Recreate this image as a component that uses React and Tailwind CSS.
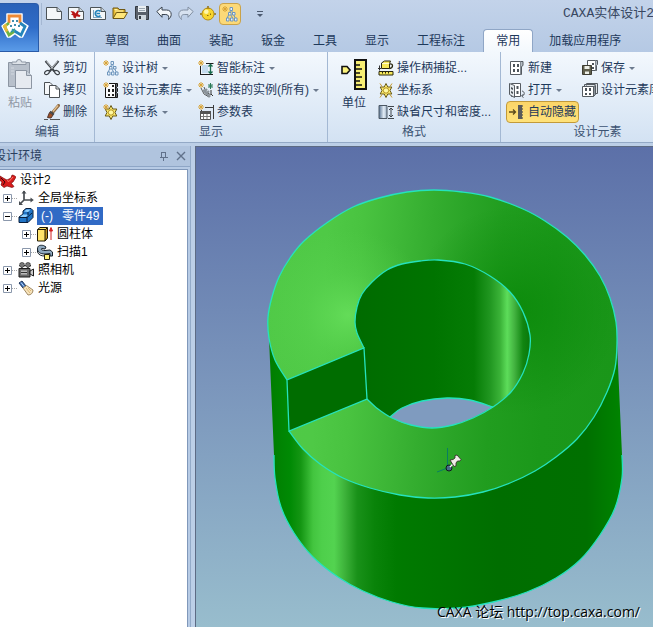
import { clsx } from "clsx";

const Icon = ({ children, className = "size-4" }) => (
  <svg viewBox="0 0 16 16" className={clsx("shrink-0", className)} fill="none" aria-hidden="true">
    {children}
  </svg>
);

const Spark = () => (
  <path d="M3 0v6M0 3h6M1 1l4 4M5 1l-4 4" stroke="#d9a436" strokeWidth="1" />
);

const Page = () => (
  <path d="M.5 1.500h10.500l4.500 4v8h-15z" fill="#f4f7f9" stroke="#4c5357" />
);

const Fold = () => <path d="M11 1.500v4h4.500" fill="#cbd5dc" stroke="#4c5357" />;

const NewIcon = () => (
  <Icon><Page /><Fold /></Icon>
);

const NewDesignIcon = () => (
  <Icon>
    <Page /><Fold />
    <path d="M2.500 5l3.500.5 1.500 2L9.500 4.500l1.500.5L9.800 8l2.700 1.500-1 1.500-3-.8-1 2.300-2-1-.3-2L3 8.500l1.500-1z" fill="#b81515" />
  </Icon>
);

const NewDrawingIcon = () => (
  <Icon>
    <Page /><Fold />
    <path d="M3 11.500h9M3.500 4v8" stroke="#7ba3c0" />
    <path d="M10.500 5.500A3 3 0 1 0 10.500 9.500M6.500 7.500h3.500" stroke="#2484bb" strokeWidth="1.600" />
  </Icon>
);

const OpenIcon = () => (
  <Icon>
    <path d="M1 12V2h5l1 1.500h6v3" fill="#e5bb35" stroke="#6e5713" />
    <path d="M1 12.500L4.500 6.500h11L12 12.500z" fill="#ffe678" stroke="#6e5713" />
    <path d="M2.500 3.500h3M3 5h8" stroke="#fff3ae" />
  </Icon>
);

const SaveIcon = () => (
  <Icon>
    <path d="M1.500.500h13v13h-12l-1-1z" fill="#59606a" stroke="#333a42" />
    <path d="M4 0h8v6H4z" fill="#e9eef2" />
    <path d="M5 2.500h6M5 4.500h6" stroke="#9ba7b2" />
    <path d="M4 9h8v5H4z" fill="#cfd7de" />
    <path d="M5 10h2v3H5z" fill="#333a42" />
  </Icon>
);

const Arrow = ({ redo }) => (
  <Icon className={clsx("size-4", redo && "-scale-x-100 opacity-45")}>
    <path
      d="M.8 5.500L6 1v3h4.500c3 0 4.700 1.800 4.700 4.300 0 2.300-1.200 3.800-2.700 5.200.7-2.500.2-5-2.700-5H6v2.800z"
      fill="#f4f7fa"
      stroke="#39434f"
      strokeLinejoin="round"
    />
  </Icon>
);

const BallIcon = () => (
  <Icon>
    <path d="M8 0v3M0 8h2M14 8h2" stroke="#8c6d14" strokeWidth="1.500" />
    <circle cx="8" cy="8" r="6" fill="#f7d52f" stroke="#b48b14" />
    <circle cx="6.300" cy="5.800" r="2.300" fill="#fff6a8" />
    <path d="M6 2.500h4" stroke="#b48b14" />
    <path d="M7 9.500h1.500M10.500 7.500v1.500" stroke="#8c6d14" />
  </Icon>
);

const TreeIcon = () => (
  <Icon>
    <g stroke="#6e96bd" strokeWidth="1">
      <path d="M9 3.500l-4 9M9 3.500l4.500 9M8 7l2.500 5" />
      <path d="M8 1.500h2.500v3H8zM6.500 6.500H9v2.500H6.500zM10.500 6.500H13v2.500h-2.500zM4.500 12H7v3H4.500zM8.500 12H11v3H8.500zM12.500 12h2.500v3h-2.500z" fill="#e9f2fb" />
    </g>
    <Spark />
  </Icon>
);

const CatalogIcon = () => (
  <Icon>
    <path d="M2.500 5v10.500h10V1.500H6" fill="#fafbfc" stroke="#161616" />
    <path d="M12.500 1.500h2v3l-1 1 1 1v3l-1 1 1 1v4h-2z" fill="#5f666d" stroke="#161616" />
    <path d="M5 7h2v3H5zM9 7h2v3H9zM5 12h2v2H5zM9 12h2v2H9zM9 3h2v2H9z" fill="#222" />
    <Spark />
  </Icon>
);

const AxisStarIcon = ({ spark }) => (
  <Icon>
    <path d="M8 1.500l1.800 3.500h4L12 8.500l1.800 3.500h-4L8 15.500 6.200 12h-4L4 8.500 2.200 5h4z" fill="#f9e76a" stroke="#6a5b1a" />
    <circle cx="8" cy="8.500" r="2.700" fill="#fff9a2" stroke="#b59322" />
    {spark ? <Spark /> : <path d="M2 1.500l2 3M14 1.500l-2 3M2 15.500l2-3M14 15.500l-2-3" stroke="#c69a2d" />}
  </Icon>
);

const SmartDimIcon = () => (
  <Icon>
    <path d="M2.500 6v9M2 14.500h13M8 3.500h7.500" stroke="#1c1c1c" />
    <path d="M4 5h6v8H4z" fill="#c4dbee" />
    <path d="M12.500 4.500v9M10.500 6.500l2-2 2 2M10.500 11.500l2 2 2-2" stroke="#186a4c" strokeWidth="1.300" />
    <Spark />
  </Icon>
);

const LinkIcon = () => (
  <Icon>
    <path d="M3 6l3 6 5 3M6 5l2 5 5 3" stroke="#555" />
    <path d="M5 8l7 7M8 12l3-3M6.500 9.500L9 7" stroke="#8a9299" strokeWidth="2.200" />
    <path d="M12.500 1v6M10 4h5M10.500 2l4 4M14.500 2l-4 4" stroke="#2a7b58" />
    <path d="M13 8v4l2 2" stroke="#333" />
    <Spark />
  </Icon>
);

const ParamIcon = () => (
  <Icon>
    <path d="M15.500 1v14M7 3.500h8M3.500 6v2" stroke="#3c3c3c" />
    <path d="M2.500 7.500h10v8h-10z" fill="#fff" stroke="#555" />
    <path d="M2 7h11v3H2z" fill="#555" />
    <path d="M5.500 10v5M9 10v5M3 12.500h9" stroke="#777" />
    <Spark />
  </Icon>
);

const CutIcon = () => (
  <Icon>
    <path d="M1.500 1l9 10.500M14.500 1l-9 10.500" stroke="#3d4247" strokeWidth="2" />
    <path d="M2.500 1.500l6 7M13.500 1.500l-6 7" stroke="#e2e6ea" strokeWidth=".8" />
    <ellipse cx="3" cy="12.500" rx="2.600" ry="1.700" stroke="#3d4247" strokeWidth="1.200" transform="rotate(-35 3 12.500)" />
    <ellipse cx="13" cy="12.500" rx="2.600" ry="1.700" stroke="#3d4247" strokeWidth="1.200" transform="rotate(35 13 12.500)" />
  </Icon>
);

const CopyIcon = () => (
  <Icon>
    <path d="M.5.500H6l3 3v9H.5z" fill="#f5f7f9" stroke="#4b5054" />
    <path d="M5.500 3.500H12l3.500 3.500v8.500h-10z" fill="#fff" stroke="#4b5054" />
    <path d="M12 3.500V7h3.500" stroke="#4b5054" />
  </Icon>
);

const BrushIcon = () => (
  <Icon>
    <path d="M14.500 1.500L9 8" stroke="#8d6a44" strokeWidth="3" strokeLinecap="round" />
    <path d="M14 1.500L9 7.500" stroke="#e3c08e" strokeWidth="1.300" />
    <path d="M5.500 8.500l3.500 2.500-2 3L3.500 13.500z" fill="#a04f24" stroke="#51332a" />
    <path d="M6 7.500l4 3" stroke="#444" strokeWidth="1.600" />
    <path d="M0 15.500h4M6 15.500h10" stroke="#555" />
  </Icon>
);

const PasteIcon = () => (
  <svg viewBox="0 0 26 32" className="h-8 w-[26px]" fill="none" aria-hidden="true">
    <path d="M1.500 3.500h21v24h-21z" fill="#b8c0cb" stroke="#8d96a3" />
    <path d="M5 5.500h14V3h-4.500a2.500 2.500 0 0 0-5 0H5z" fill="#dde2e8" stroke="#8d96a3" />
    <path d="M4 9h3M4 12h3M4 15h3" stroke="#d2d8e0" />
    <path d="M8.500 11.500h11l5 5v13h-16z" fill="#e6eaf0" stroke="#8d96a3" />
    <path d="M19.500 11.500v5h5" fill="#c8d0da" stroke="#8d96a3" />
  </svg>
);

const UnitIcon = () => (
  <svg viewBox="0 0 26 32" className="h-8 w-[26px]" fill="none" aria-hidden="true">
    <path d="M1 7.500h5l3 3.500-3 3.500H1z" fill="#fbf27c" stroke="#111" strokeWidth="1.600" />
    <path d="M14 1h11v29H14z" fill="#f7ee73" stroke="#111" strokeWidth="2" />
    <path d="M14 6h5M14 10h7M14 14h5M14 18h7M14 22h5M14 26h7" stroke="#111" strokeWidth="1.500" />
  </svg>
);

const SnapIcon = () => (
  <Icon>
    <path d="M3.500 3l3-2h6l-1 2.500v5h-8z" fill="#f7e95b" stroke="#29260f" />
    <path d="M4 3.500h7.500" stroke="#fffbd0" />
    <path d="M11.500 4c4-1 4 4 0 4.500" stroke="#29260f" strokeWidth="1.300" />
    <path d="M1.500 5.500v5M0 8.500h3" stroke="#333" />
    <path d="M1 11.500h14v3.500H1z" fill="#f7e95b" stroke="#29260f" />
    <path d="M4.500 11.500v2M7.500 11.500v2M10.500 11.500v2" stroke="#29260f" />
  </Icon>
);

const SizeIcon = () => (
  <Icon>
    <path d="M1 1.500h8v13H1z" fill="url(#sizeFill)" stroke="#4d5864" />
    <path d="M10 2.500h6M10 14.500h6M13 4v9M11 6l2-2 2 2M11 11l2 2 2-2" stroke="#40464d" />
    <defs>
      <linearGradient id="sizeFill">
        <stop stopColor="#5b7695" />
        <stop offset=".6" stopColor="#e6eff8" />
        <stop offset="1" stopColor="#95a8bd" />
      </linearGradient>
    </defs>
  </Icon>
);

const BookIcon = () => (
  <Icon>
    <path d="M1.500 1.500h10v13h-10z" fill="#fff" stroke="#555b61" />
    <path d="M11.500 1.500h2.500v4l-1.500 1V14.500h-1" fill="#b4bcc4" stroke="#555b61" />
    <path d="M4 4h2v3H4zM8 4h2v3H8zM4 9h2v3H4zM8 9h2v3H8z" fill="#4d545a" />
  </Icon>
);

const BookOpenIcon = () => (
  <Icon>
    <path d="M2.500 1.500h9v13h-9z" fill="#fff" stroke="#555b61" />
    <path d="M.5 1.500l5 2v12l-5-3z" fill="#e6ebef" stroke="#555b61" />
    <path d="M7.500 4h2v3h-2zM7.500 9h2v3h-2zM2 5l2 1v2L2 7zM2 9l2 1v2l-2-1z" fill="#4d545a" />
    <path d="M13 9c3 .5 3 4.500 0 5m1.500-2L12.500 14l2 1.500" stroke="#555b61" />
  </Icon>
);

const BookSaveIcon = () => (
  <Icon>
    <path d="M5.500.500h8v10h-8z" fill="#fff" stroke="#555b61" />
    <path d="M13.500.500H15.500v4l-1 1v5h-1" fill="#b4bcc4" stroke="#555b61" />
    <path d="M10 3h2v2h-2zM10 7h2v2h-2z" fill="#4d545a" />
    <path d="M.5 5.500h9v9h-9z" fill="#605f4c" stroke="#3d3c31" />
    <path d="M2.500 6h5v3h-5zM3 11.500h4V14H3z" fill="#eef0e8" />
  </Icon>
);

const BooksIcon = () => (
  <Icon>
    <path d="M4.500 3.500V1.500h11v10h-2M2.500 5V2.500h11" fill="#dfe4e8" stroke="#555b61" />
    <path d="M.5 4.500h11v10H.5z" fill="#fff" stroke="#555b61" />
    <path d="M11.500 4.500l2-1v9l-2 2z" fill="#8b939b" stroke="#555b61" />
    <path d="M3 6h2v3H3zM7 6h2v3H7zM3 11h2v2H3zM7 11h2v2H7z" fill="#4d545a" />
  </Icon>
);

const AutoHideIcon = () => (
  <Icon>
    <path d="M0 8h6M4 5.500L6.500 8 4 10.500" stroke="#5b4a1c" strokeWidth="1.300" />
    <path d="M9 1h4v14H9z" fill="#5a5a5a" />
    <path d="M13.500 1v14" stroke="#92855a" strokeDasharray="2 1" />
  </Icon>
);

const AppLogo = () => (
  <svg viewBox="0 0 28 28" className="size-7" fill="none" aria-hidden="true">
    <path d="M6 2h15v8l6 4-5.500 11h-3L14 21.500 9.500 25h-3L1 14l5-4z" fill="#fff" stroke="#fff" strokeWidth="1.500" strokeLinejoin="round" />
    <path d="M8 11V4h11v7" stroke="#ef8a35" strokeWidth="2.800" />
    <path d="M8 11l-4.500 3.500L8 23l5-3.500" stroke="#6fb244" strokeWidth="2.800" />
    <path d="M19 11l5 3.500L20 23l-6.500-4" stroke="#2485bb" strokeWidth="2.800" />
    <path d="M5.500 12.500l-2 2 2.500 5" stroke="#e8b83a" strokeWidth="2.800" />
    <path d="M10 20l4-3M14 19.500l-3-2.500" stroke="#2f9aa0" strokeWidth="1.600" />
    <path d="M11 8h2v2h-2zM15 8h2v2h-2zM9 13h2v2H9zM13 12h2v2h-2zM17 13h2v2h-2z" fill="#3f8fae" />
  </svg>
);

const DesignIcon = () => (
  <Icon>
    <path d="M0 4l4 2.500 3 1.500 4-2 1-3 2 .5 2 1.500-3 5-2 1 3 3.500-2 1-5-1.500-3 1.500-3-2.500 1-3-2-1.500z" fill="#d81c1c" stroke="#7e0c0c" strokeWidth=".7" />
    <path d="M7 8.500l2 1 4-4.500" stroke="#ff7c6d" />
    <path d="M1 6l4 4-2 3" stroke="#3b0808" />
  </Icon>
);

const AxisIcon = () => (
  <Icon>
    <path d="M6 1v9h8M6 10l-4 4" stroke="#484d52" strokeWidth="1.700" />
    <path d="M3.500 3.500L6 .5l2.500 3zM12.500 7.500L15.800 10l-3.300 2.500zM1 11v4h4z" fill="#484d52" />
  </Icon>
);

const PartIcon = () => (
  <Icon>
    <path d="M1 9l4-3V3l3-2.500h5l2 2v7l-5 5H1z" fill="#2074c6" stroke="#081e3c" />
    <path d="M2 9l3-2.500h5L8 9zM6 3.500L8.500 1.500h4L10 4z" fill="#8fd0ff" />
    <path d="M1 9.500h8v5M9 9.500l5-4.500M10 4v3" stroke="#081e3c" />
  </Icon>
);

const CylinderIcon = () => (
  <Icon>
    <path d="M.5 3.500L3 1.500h7v10.500L8 15H.5z" fill="#ffe36a" stroke="#201a07" />
    <path d="M8 4l2.500-2.500V12L8 15z" fill="#bd8e19" stroke="#201a07" />
    <path d="M.5 3.500H8" stroke="#201a07" />
    <path d="M14 14V4M12.500 5L14 1.500 15.500 5z" stroke="#d22020" fill="#d22020" />
  </Icon>
);

const SweepIcon = () => (
  <Icon>
    <path d="M.5 5c0-4 3-4 6-3.500L9 3 8 5 5 4.500c-2 .5 0 2 3 2l5-.5 2.500 2v4H13V9.500l-5 .5C3 10 .5 8 .5 5z" fill="#8fa9bf" stroke="#15202a" />
    <path d="M.5 5v3c1 3 4 4 7 4" stroke="#15202a" />
    <path d="M7.500 10.500h5v5h-5z" fill="#fff27a" stroke="#282510" />
  </Icon>
);

const CameraIcon = () => (
  <Icon>
    <circle cx="4" cy="3" r="2.500" fill="#777" stroke="#222" strokeDasharray="2 1" />
    <circle cx="10" cy="3" r="2.500" fill="#777" stroke="#222" strokeDasharray="2 1" />
    <path d="M1 6.500h11v8.500H1z" fill="#6b6b6b" stroke="#1d1d1d" />
    <path d="M12 9l3.500-2v7L12 12z" fill="#ccc" stroke="#1d1d1d" />
    <path d="M3 8.500h6v4H3z" fill="#bcbcbc" />
    <path d="M3 10.500h6" stroke="#333" />
  </Icon>
);

const LightIcon = () => (
  <Icon>
    <path d="M1 3l3-2 4 5-3 2z" fill="#3d6fb4" stroke="#1d3358" />
    <path d="M3 2.500l3 4" stroke="#b6d6fa" />
    <path d="M5 8l3.500-2.500L15 10c0 3-2 5-5 5z" fill="#f8e5bd" stroke="#a08965" />
    <path d="M8 8l4 5M10 8l3 3" stroke="#dcb778" />
  </Icon>
);

const quickTools = [
  { name: "新建文件", icon: <NewIcon /> },
  { name: "新建设计", icon: <NewDesignIcon /> },
  { name: "新建图纸", icon: <NewDrawingIcon /> },
  { name: "打开文件", icon: <OpenIcon /> },
  { name: "保存文件", icon: <SaveIcon /> },
  { name: "撤销", icon: <Arrow /> },
  { name: "重做", icon: <Arrow redo /> },
  { name: "三维球", icon: <BallIcon /> },
  { name: "显示设计树", icon: <TreeIcon />, active: true },
];

const tabs = ["特征", "草图", "曲面", "装配", "钣金", "工具", "显示", "工程标注", "常用", "加载应用程序"];

const Caret = () => (
  <span className="ml-px h-0 w-0 border-x-3 border-t-3 border-x-transparent border-t-[#6c7a8e]" />
);

const Tool = ({ icon, label, menu, active }) => (
  <button
    type="button"
    className={clsx(
      "flex h-[22px] items-center gap-[3px] rounded-sm border px-[2px]",
      active ? "border-[#c29a3a] bg-linear-to-b from-[#fbd568] to-[#ffe27a]" : "border-transparent"
    )}
  >
    {icon}
    <span>{label}</span>
    {menu && <Caret />}
  </button>
);

const BigTool = ({ icon, label, disabled }) => (
  <button
    type="button"
    disabled={disabled}
    className={clsx("flex h-[54px] flex-col items-center justify-between px-1 pt-[2px] leading-4", disabled && "text-[#9199a6]")}
  >
    {icon}
    <span>{label}</span>
  </button>
);

const Column = ({ children }) => <div className="flex flex-col items-start">{children}</div>;

const Group = ({ title, className, children }) => (
  <section className="flex shrink-0 flex-col border-r border-[#a3b8d3] pt-[5px]">
    <div className={clsx("flex", className)}>{children}</div>
    <h2 className="text-center leading-[18px] text-[#3c5373]">{title}</h2>
  </section>
);

const Ribbon = () => (
  <div className="flex h-[91px] shrink-0 overflow-hidden border-b border-[#93a9c6] bg-linear-to-b from-[#f3f8fd] via-[#e3edf8] to-[#d3e2f3]">
    <Group title="编辑" className="gap-1 pl-[3px] pr-1">
      <BigTool icon={<PasteIcon />} label="粘贴" disabled />
      <Column>
        <Tool icon={<CutIcon />} label="剪切" />
        <Tool icon={<CopyIcon />} label="拷贝" />
        <Tool icon={<BrushIcon />} label="删除" />
      </Column>
    </Group>
    <Group title="显示" className="px-[5px]">
      <Column>
        <Tool icon={<TreeIcon />} label="设计树" menu />
        <Tool icon={<CatalogIcon />} label="设计元素库" menu />
        <Tool icon={<AxisStarIcon spark />} label="坐标系" menu />
      </Column>
      <Column>
        <Tool icon={<SmartDimIcon />} label="智能标注" menu />
        <Tool icon={<LinkIcon />} label="链接的实例(所有)" menu />
        <Tool icon={<ParamIcon />} label="参数表" />
      </Column>
    </Group>
    <Group title="格式" className="gap-1 pl-[9px] pr-[6px]">
      <BigTool icon={<UnitIcon />} label="单位" />
      <Column>
        <Tool icon={<SnapIcon />} label="操作柄捕捉..." />
        <Tool icon={<AxisStarIcon />} label="坐标系" />
        <Tool icon={<SizeIcon />} label="缺省尺寸和密度..." />
      </Column>
    </Group>
    <Group title="设计元素" className="pl-[5px] pr-5">
      <Column>
        <Tool icon={<BookIcon />} label="新建" />
        <Tool icon={<BookOpenIcon />} label="打开" menu />
        <Tool icon={<AutoHideIcon />} label="自动隐藏" active />
      </Column>
      <Column>
        <Tool icon={<BookSaveIcon />} label="保存" menu />
        <Tool icon={<BooksIcon />} label="设计元素库" menu />
      </Column>
    </Group>
  </div>
);

const Header = () => (
  <header className="flex shrink-0 bg-linear-to-b from-[#c3d3ea] to-[#b5c9e4]">
    <button
      type="button"
      aria-label="菜单"
      className="mt-[3px] flex w-[39px] items-center rounded-tr-sm border border-l-0 border-[#2a5ba8] bg-linear-to-b from-[#2a62b8] via-[#2f6cc8] to-[#5a9be8] pb-1 pl-px"
    >
      <AppLogo />
    </button>
    <div className="flex min-w-0 flex-1 flex-col">
      <div className="flex h-7 items-center justify-between overflow-hidden pl-[2px]">
        <div className="flex shrink-0 items-center border-l border-[#a4b7d2] pl-px">
          {quickTools.map((tool) => (
            <button
              key={tool.name}
              type="button"
              aria-label={tool.name}
              className={clsx(
                "flex size-[22px] items-center justify-center rounded-sm",
                tool.active && "border border-[#c9a24a] bg-[#fcd978]"
              )}
            >
              {tool.icon}
            </button>
          ))}
          <button type="button" aria-label="自定义" className="ml-4 flex flex-col items-center gap-[2px]">
            <span className="h-px w-[6px] bg-[#4c5a70]" />
            <span className="h-0 w-0 border-x-3 border-t-3 border-x-transparent border-t-[#4c5a70]" />
          </button>
        </div>
        <h1 className="w-[90px] shrink-0 whitespace-nowrap font-['Liberation_Mono','Noto_Sans_CJK_SC',monospace] text-[13px] text-[#384761]">
          CAXA实体设计2013
        </h1>
      </div>
      <nav className="flex h-6 overflow-hidden pt-px">
        {tabs.map((tab) => (
          <button
            key={tab}
            type="button"
            className={clsx(
              "shrink-0",
              tab === "常用"
                ? "ml-1 mr-[2px] rounded-t-sm border-x border-t border-[#8fa6c6] bg-linear-to-b from-white to-[#f3f8fd] px-3"
                : "px-[14px]"
            )}
          >
            {tab}
          </button>
        ))}
      </nav>
    </div>
  </header>
);

const treeRows = [
  { label: "全局坐标系", icon: <AxisIcon />, sign: "+" },
  {
    label: "零件49",
    prefix: "(-)",
    icon: <PartIcon />,
    sign: "-",
    selected: true,
    children: [
      { label: "圆柱体", icon: <CylinderIcon />, sign: "+" },
      { label: "扫描1", icon: <SweepIcon />, sign: "+" },
    ],
  },
  { label: "照相机", icon: <CameraIcon />, sign: "+" },
  { label: "光源", icon: <LightIcon />, sign: "+" },
];

const Expander = ({ sign }) => (
  <svg viewBox="0 0 15 9" className="h-[9px] w-[15px] shrink-0" aria-hidden="true">
    <path d="M.5.500h8v8h-8z" fill="#fff" stroke="#8b98ac" />
    <path d={sign === "+" ? "M2 4.500h5M4.500 2v5" : "M2 4.500h5"} stroke="#000" />
    <path d="M9 4.500h6" stroke="#a9a9a9" strokeDasharray="1 1" />
  </svg>
);

const TreeList = ({ rows, className }) => (
  <ul className={className}>
    {rows.map((row) => (
      <li key={row.label}>
        <button type="button" className="flex h-[18px] items-center text-left">
          <Expander sign={row.sign} />
          {row.icon}
          <span
            className={clsx(
              "ml-[3px] flex h-[18px] items-center",
              row.selected ? "gap-[9px] bg-[#316ac5] px-1 text-white" : "px-px"
            )}
          >
            {row.prefix && <span>{row.prefix}</span>}
            <span>{row.label}</span>
          </span>
        </button>
        {row.children && <TreeList rows={row.children} className="pl-[19px]" />}
      </li>
    ))}
  </ul>
);

const Sidebar = () => (
  <aside className="flex w-[191px] shrink-0 flex-col border-r border-[#93abc9] bg-[#b7cbe5]">
    <div className="flex h-[21px] items-center justify-between border-b border-[#8ea6c6] bg-[#b0c4de] pr-1 text-[#2b3f5f]">
      <h2 className="-ml-[6px]">设计环境</h2>
      <div className="flex gap-[7px]">
        <button type="button" aria-label="固定">
          <svg viewBox="0 0 10 10" className="size-[10px]" fill="none" stroke="#61718a">
            <path d="M2.500 1v5M6.500 1v5M2 1.500h5M1 6.500h8M4.500 7v3" />
          </svg>
        </button>
        <button type="button" aria-label="关闭">
          <svg viewBox="0 0 10 10" className="size-[10px]" fill="none" stroke="#61718a" strokeWidth="1.400">
            <path d="M1 1l8 8M9 1L1 9" />
          </svg>
        </button>
      </div>
    </div>
    <div className="mr-[2px] mt-[2px] flex-1 border-r border-t border-[#8098ba] bg-white text-black">
      <button type="button" className="flex h-[19px] items-center gap-1 pt-px">
        <DesignIcon />
        <span>设计2</span>
      </button>
      <TreeList rows={treeRows} className="pl-[3px]" />
    </div>
  </aside>
);

// Catmull-Rom through the given points, as the body of a path
const curve = (points) => {
  let d = `M${points[0].join(" ")}`;
  for (let i = 0; i < points.length - 1; i++) {
    const p0 = points[i - 1] || points[i];
    const p1 = points[i];
    const p2 = points[i + 1];
    const p3 = points[i + 2] || p2;
    d += `C${p1[0] + (p2[0] - p0[0]) / 6} ${p1[1] + (p2[1] - p0[1]) / 6} ${p2[0] - (p3[0] - p1[0]) / 6} ${p2[1] - (p3[1] - p1[1]) / 6} ${p2[0]} ${p2[1]}`;
  }
  return d;
};

const outer = curve([
  [287, 380], [275, 360], [269, 338], [268, 317], [272, 297], [279, 277], [290, 258], [304, 241], [328, 222],
  [353, 207], [379, 198], [407, 192], [434, 190], [462, 192], [490, 197], [523, 209], [545, 221], [567, 237],
  [585, 255], [600, 276], [610, 298], [616, 322], [617, 343], [615, 368], [607, 392], [594, 417], [577, 439],
  [556, 457], [535, 471], [510, 483], [483, 492], [455, 497], [428, 498], [400, 495], [370, 488], [343, 478],
  [320, 464], [303, 449], [289, 431],
]);

const inner = curve([
  [367, 399], [378, 409], [392, 418], [411, 425], [432, 428], [453, 425], [473, 418], [493, 407], [511, 392],
  [523, 373], [529, 354], [530, 335], [523, 312], [510, 292], [490, 276], [465, 264], [438, 260], [420, 261],
  [402, 264], [387, 270], [372, 282], [362, 294], [357, 307], [355, 322], [357, 333], [364, 348],
]);

const base = curve([
  [274, 455], [275, 478], [281, 507], [294, 533], [313, 557], [338, 577], [363, 591], [392, 602], [422, 608],
  [458, 608], [493, 602], [527, 592], [556, 578], [580, 560], [600, 535], [615, 508], [622, 478], [622, 455],
]);

const opening = curve([[390, 417], [402, 408], [422, 401], [447, 398], [470, 400], [493, 407]]);

const innerFace = `${inner}L367 399Z`;
const topFace = `${outer}${inner.replace("M", "L")}L287 380Z`;

const Model = () => (
  <svg viewBox="196 147 457 480" preserveAspectRatio="xMinYMin meet" className="block size-full" fill="none">
    <defs>
      <linearGradient id="side" gradientUnits="userSpaceOnUse" x1="269" x2="622" y1="0" y2="0">
        <stop offset="0" stopColor="#007c00" />
        <stop offset=".06" stopColor="#008a04" />
        <stop offset=".09" stopColor="#149613" />
        <stop offset=".125" stopColor="#43c53f" />
        <stop offset=".15" stopColor="#4ecf4b" />
        <stop offset=".185" stopColor="#53d350" />
        <stop offset=".215" stopColor="#3db23a" />
        <stop offset=".25" stopColor="#199119" />
        <stop offset=".3" stopColor="#098309" />
        <stop offset=".36" stopColor="#007a00" />
        <stop offset=".65" stopColor="#006e00" />
        <stop offset=".9" stopColor="#007000" />
        <stop offset="1" stopColor="#008400" />
      </linearGradient>
      <linearGradient id="wall" gradientUnits="userSpaceOnUse" x1="355" x2="530" y1="0" y2="0">
        <stop offset="0" stopColor="#006b00" />
        <stop offset=".45" stopColor="#007400" />
        <stop offset=".68" stopColor="#057c05" />
        <stop offset=".77" stopColor="#209620" />
        <stop offset=".83" stopColor="#3bb338" />
        <stop offset=".87" stopColor="#5ddd5a" />
        <stop offset=".91" stopColor="#44b441" />
        <stop offset=".96" stopColor="#118611" />
        <stop offset="1" stopColor="#0a780a" />
      </linearGradient>
      <linearGradient id="face" gradientUnits="userSpaceOnUse" x1="268" x2="617" y1="325" y2="350">
        <stop offset="0" stopColor="#50c947" />
        <stop offset=".15" stopColor="#4fc946" />
        <stop offset=".25" stopColor="#49c340" />
        <stop offset=".35" stopColor="#3fb838" />
        <stop offset=".45" stopColor="#34ad2f" />
        <stop offset=".55" stopColor="#2aa427" />
        <stop offset=".65" stopColor="#219d1f" />
        <stop offset=".8" stopColor="#1b981a" />
        <stop offset="1" stopColor="#1a9619" />
      </linearGradient>
      <radialGradient id="glow" gradientUnits="userSpaceOnUse" cx="348" cy="315" r="85">
        <stop offset="0" stopColor="#6ce460" stopOpacity=".75" />
        <stop offset=".5" stopColor="#60da56" stopOpacity=".3" />
        <stop offset="1" stopColor="#5ad650" stopOpacity="0" />
      </radialGradient>
      <radialGradient id="shade" gradientUnits="userSpaceOnUse" cx="515" cy="310" r="105">
        <stop offset="0" stopColor="#008000" stopOpacity=".6" />
        <stop offset=".5" stopColor="#008000" stopOpacity=".28" />
        <stop offset="1" stopColor="#008000" stopOpacity="0" />
      </radialGradient>
    </defs>
    <path d={`${base}L617 343L500 250L350 250L269 338Z`} fill="url(#side)" />
    <path d={topFace} fill="url(#face)" />
    <path d={topFace} fill="url(#shade)" />
    <path d={topFace} fill="url(#glow)" />
    <path d={innerFace} fill="url(#wall)" />
    <path d={`${opening}C473 419 453 428 432 428C412 427 398 422 390 417Z`} fill="#7f9bbf" />
    <path d="M287 380L364 348L367 399L289 431Z" fill="#006d00" />
    <g stroke="#25e2bd" strokeWidth="1.300">
      <path d={outer} />
      <path d={inner} />
      <path d={base} />
      <path d={opening} />
      <path d="M289 431L287 380L364 348L367 399Z" />
    </g>
    <path d="M447.500 448v20L437 472" stroke="#087e62" />
    <circle cx="449" cy="468" r="3" fill="#456a85" stroke="#101820" />
    <path d="M450 467l5-5" stroke="#fff" strokeWidth="1.500" />
    <path d="M450 460l3-.5 2-1.500v-2.500l2-.5 4 4.500-1 1.500-2.500 0-1.500 2 0 3-2 .5z" fill="#f0eee8" stroke="#38342c" strokeWidth=".9" />
  </svg>
);

export default function App() {
  return (
    <div className="flex h-screen flex-col overflow-hidden whitespace-nowrap bg-[#bccfe7] font-['Liberation_Sans','Noto_Sans_CJK_SC',sans-serif] text-xs text-[#1e395b]">
      <Header />
      <Ribbon />
      <div className="mt-[3px] flex min-h-0 flex-1">
        <Sidebar />
        <main className="relative ml-1 min-w-0 flex-1 border-l border-t border-[#5d6b84] bg-linear-to-b from-[#5c70a8] via-[#7b96bc] to-[#98bdcd]">
          <Model />
          <p className="absolute bottom-[5px] right-[13px] font-['Open_Sans','Noto_Sans_CJK_SC',sans-serif] text-sm text-black [text-shadow:1px_1px_0_#ffffff]">
            CAXA 论坛 http://top.caxa.com/
          </p>
        </main>
      </div>
    </div>
  );
}
